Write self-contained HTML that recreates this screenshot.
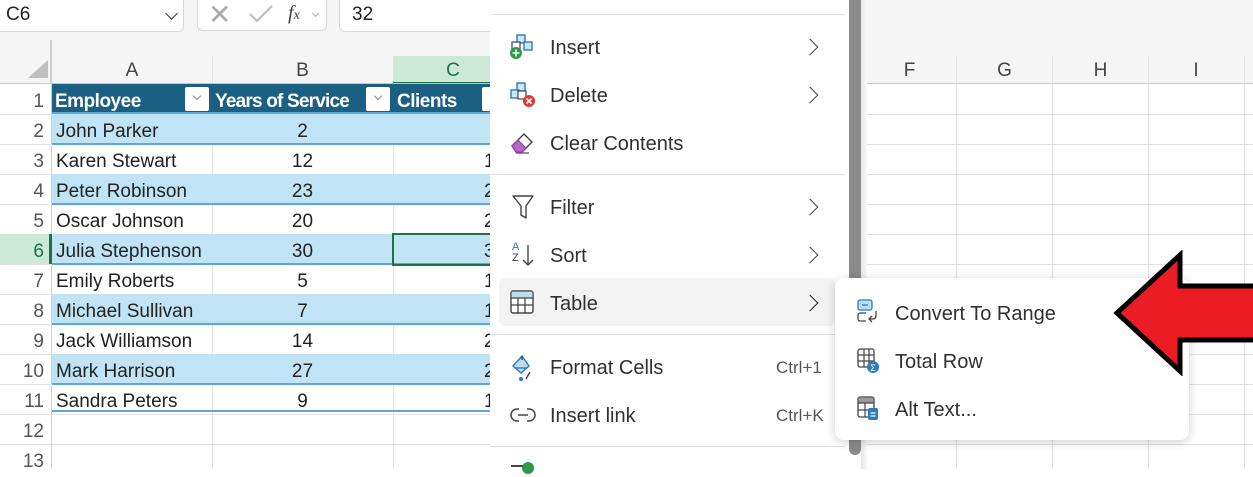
<!DOCTYPE html>
<html><head><meta charset="utf-8"><style>
*{margin:0;padding:0;box-sizing:border-box}
body{width:1253px;height:469px;overflow:hidden;background:#fff;font-family:"Liberation Sans",sans-serif;position:relative}
.a{position:absolute}
.top{left:0;top:0;width:1253px;height:84px;background:#f5f5f5}
.box{background:#fff;border:1px solid #d8d8d8;border-radius:6px}
.hl{height:1px;background:#e1e1e1}
.vl{width:1px;background:#e1e1e1}
.rn{left:0;width:50px;text-align:right;padding-right:6px;font-size:19px;color:#555;height:30px;line-height:30px;margin-top:2px}
.cell{font-size:19px;color:#222;height:30px;line-height:30px;margin-top:2px}
.band{background:#c0e4f5;border-bottom:2px solid #5aa8d8}
.mi{left:550px;font-size:20px;color:#303030;margin-top:1px}
.chev{left:804px;width:12px;height:12px;border-right:1.6px solid #444;border-top:1.6px solid #444;transform:rotate(45deg)}
.sep{left:490px;width:355px;height:1px;background:#e0e0e0}
.si{left:895px;font-size:20px;color:#303030;margin-top:1px}
.ch{font-size:19px;color:#444;text-align:center;margin-top:3px}
.dd{width:24px;height:24px;background:#fff;border-radius:2px}
.dd:after{content:"";position:absolute;left:9px;top:6px;width:5px;height:5px;border-right:1px solid #888;border-bottom:1px solid #888;transform:rotate(45deg)}
</style></head><body>
<div class="a top"></div>
<div class="a box" style="left:-6px;top:-8px;width:190px;height:40px"></div>
<div class="a" style="left:6px;top:4px;font-size:19px;color:#222">C6</div>
<div class="a" style="left:167px;top:9px;width:9px;height:9px;border-right:1.6px solid #333;border-bottom:1.6px solid #333;transform:rotate(45deg)"></div>
<div class="a box" style="left:197px;top:-8px;width:130px;height:39px"></div>
<div class="a" style="left:208px;top:-2px;font-size:28px;color:#aaa;font-weight:100">✕</div>
<svg class="a" style="left:248px;top:4px" width="26" height="20"><path d="M2 10 L9 17 L24 2" stroke="#bbb" stroke-width="2" fill="none"/></svg>
<div class="a" style="left:288px;top:2px;font-size:20px;font-style:italic;font-family:'Liberation Serif',serif;color:#444">f<span style="font-size:14px">x</span></div>
<div class="a" style="left:313px;top:11px;width:5px;height:5px;border-right:1px solid #aaa;border-bottom:1px solid #aaa;transform:rotate(45deg)"></div>
<div class="a box" style="left:339px;top:-8px;width:160px;height:40px;border-right:none"></div>
<div class="a" style="left:352px;top:4px;font-size:19px;color:#222">32</div>
<div class="a" style="left:50px;top:40px;width:2px;height:44px;background:#ccc"></div>
<svg class="a" style="left:28px;top:60px" width="20" height="18"><path d="M20 0 L20 18 L0 18Z" fill="#bfbfbf"/></svg>
<div class="a vl" style="left:212px;top:56px;height:413px"></div>
<div class="a vl" style="left:393px;top:56px;height:413px"></div>
<div class="a" style="left:393px;top:56px;width:100px;height:28px;background:#cbe9d6;border-bottom:2px solid #1e7145"></div>
<div class="a ch" style="left:52px;top:57px;width:160px">A</div>
<div class="a ch" style="left:212px;top:57px;width:181px">B</div>
<div class="a ch" style="left:393px;top:57px;width:120px;color:#1e7145">C</div>
<div class="a" style="left:0;top:83px;width:490px;height:1px;background:#c8c8c8"></div>
<div class="a" style="left:866px;top:83px;width:387px;height:1px;background:#c8c8c8"></div>
<div class="a ch" style="left:862px;top:57px;width:95px">F</div>
<div class="a ch" style="left:957px;top:57px;width:95px">G</div>
<div class="a ch" style="left:1053px;top:57px;width:95px">H</div>
<div class="a ch" style="left:1148px;top:57px;width:96px">I</div>
<div class="a vl" style="left:956px;top:56px;height:413px"></div>
<div class="a vl" style="left:1052px;top:56px;height:413px"></div>
<div class="a vl" style="left:1148px;top:56px;height:413px"></div>
<div class="a vl" style="left:1244px;top:56px;height:413px"></div>
<div class="a vl" style="left:51px;top:84px;height:385px;background:#d0d0d0"></div>
<div class="a hl" style="left:0;top:114px;width:1253px"></div>
<div class="a hl" style="left:0;top:144px;width:1253px"></div>
<div class="a hl" style="left:0;top:174px;width:1253px"></div>
<div class="a hl" style="left:0;top:204px;width:1253px"></div>
<div class="a hl" style="left:0;top:234px;width:1253px"></div>
<div class="a hl" style="left:0;top:264px;width:1253px"></div>
<div class="a hl" style="left:0;top:294px;width:1253px"></div>
<div class="a hl" style="left:0;top:324px;width:1253px"></div>
<div class="a hl" style="left:0;top:354px;width:1253px"></div>
<div class="a hl" style="left:0;top:384px;width:1253px"></div>
<div class="a hl" style="left:0;top:414px;width:1253px"></div>
<div class="a hl" style="left:0;top:444px;width:1253px"></div>
<div class="a" style="left:0;top:234px;width:50px;height:30px;background:#cbe9d6"></div>
<div class="a" style="left:49px;top:234px;width:3px;height:30px;background:#1e7145"></div>
<div class="a rn" style="top:85px">1</div><div class="a rn" style="top:115px">2</div><div class="a rn" style="top:145px">3</div><div class="a rn" style="top:175px">4</div><div class="a rn" style="top:205px">5</div><div class="a rn" style="top:235px;color:#1e7145">6</div><div class="a rn" style="top:265px">7</div><div class="a rn" style="top:295px">8</div><div class="a rn" style="top:325px">9</div><div class="a rn" style="top:355px">10</div><div class="a rn" style="top:385px">11</div><div class="a rn" style="top:415px">12</div><div class="a rn" style="top:445px">13</div>
<div class="a" style="left:52px;top:84px;width:440px;height:30px;background:#1b5f82;border-bottom:2px solid #5aa8d8"></div>
<div class="a" style="left:55px;top:86px;font-size:19px;font-weight:bold;color:#fff;line-height:32px;letter-spacing:-0.5px">Employee</div>
<div class="a dd" style="left:185px;top:87px"></div>
<div class="a" style="left:215px;top:86px;font-size:19px;font-weight:bold;color:#fff;line-height:32px;letter-spacing:-0.8px">Years of Service</div>
<div class="a dd" style="left:366px;top:87px"></div>
<div class="a" style="left:397px;top:86px;font-size:19px;font-weight:bold;color:#fff;line-height:32px;letter-spacing:-0.5px">Clients</div>
<div class="a dd" style="left:482px;top:87px"></div>
<div class="a band" style="left:52px;top:114px;width:440px;height:31px"></div>
<div class="a band" style="left:52px;top:174px;width:440px;height:31px"></div>
<div class="a band" style="left:52px;top:234px;width:440px;height:31px"></div>
<div class="a band" style="left:52px;top:294px;width:440px;height:31px"></div>
<div class="a band" style="left:52px;top:354px;width:440px;height:31px"></div>
<div class="a" style="left:52px;top:144px;width:440px;height:1px;background:#5aa8d8"></div>
<div class="a" style="left:52px;top:410px;width:440px;height:2px;background:#5aa8d8"></div>
<div class="a" style="left:392px;top:233px;width:102px;height:33px;border:2.5px solid #1e7145"></div>
<div class="a cell" style="left:56px;top:115px">John Parker</div><div class="a cell" style="left:212px;top:115px;width:181px;text-align:center">2</div>
<div class="a cell" style="left:56px;top:145px">Karen Stewart</div><div class="a cell" style="left:212px;top:145px;width:181px;text-align:center">12</div>
<div class="a cell" style="left:56px;top:175px">Peter Robinson</div><div class="a cell" style="left:212px;top:175px;width:181px;text-align:center">23</div>
<div class="a cell" style="left:56px;top:205px">Oscar Johnson</div><div class="a cell" style="left:212px;top:205px;width:181px;text-align:center">20</div>
<div class="a cell" style="left:56px;top:235px">Julia Stephenson</div><div class="a cell" style="left:212px;top:235px;width:181px;text-align:center">30</div>
<div class="a cell" style="left:56px;top:265px">Emily Roberts</div><div class="a cell" style="left:212px;top:265px;width:181px;text-align:center">5</div>
<div class="a cell" style="left:56px;top:295px">Michael Sullivan</div><div class="a cell" style="left:212px;top:295px;width:181px;text-align:center">7</div>
<div class="a cell" style="left:56px;top:325px">Jack Williamson</div><div class="a cell" style="left:212px;top:325px;width:181px;text-align:center">14</div>
<div class="a cell" style="left:56px;top:355px">Mark Harrison</div><div class="a cell" style="left:212px;top:355px;width:181px;text-align:center">27</div>
<div class="a cell" style="left:56px;top:385px">Sandra Peters</div><div class="a cell" style="left:212px;top:385px;width:181px;text-align:center">9</div>
<div class="a cell" style="left:484px;top:145px">1</div><div class="a cell" style="left:484px;top:175px">2</div><div class="a cell" style="left:484px;top:205px">2</div><div class="a cell" style="left:484px;top:235px">3</div><div class="a cell" style="left:484px;top:265px">1</div><div class="a cell" style="left:484px;top:295px">1</div><div class="a cell" style="left:484px;top:325px">2</div><div class="a cell" style="left:484px;top:355px">2</div><div class="a cell" style="left:484px;top:385px">1</div>
<div class="a" style="left:490px;top:0;width:359px;height:469px;background:#fff"></div>
<div class="a" style="left:849px;top:0;width:12px;height:455px;background:#8a8a8a;border-radius:0 0 6px 6px"></div>
<div class="a" style="left:861px;top:0;width:6px;height:469px;background:linear-gradient(90deg,#e6e6e6,#f9f9f9)"></div>
<div class="a sep" style="top:14px"></div>
<div class="a sep" style="top:174px"></div>
<div class="a sep" style="top:334px"></div>
<div class="a sep" style="top:446px"></div>
<div class="a" style="left:499px;top:278px;width:336px;height:48px;background:#f3f3f3;border-radius:6px"></div>
<svg class="a" style="left:509px;top:34px" width="28" height="28"><rect x="8" y="1" width="8" height="8" fill="#cfe6f7" stroke="#2a7bc0" stroke-width="1.4"/><rect x="15" y="8" width="8" height="8" fill="#cfe6f7" stroke="#2a7bc0" stroke-width="1.4"/><rect x="3" y="8" width="8" height="8" fill="#fff" stroke="#444" stroke-width="1.2"/><circle cx="7" cy="19" r="6" fill="#2e9a48"/><path d="M7 15.5v7M3.5 19h7" stroke="#fff" stroke-width="1.6"/></svg>
<div class="a mi" style="top:36px">Insert</div><div class="a chev" style="top:41px"></div>
<svg class="a" style="left:509px;top:82px" width="28" height="28"><rect x="8" y="1" width="8" height="8" fill="#cfe6f7" stroke="#2a7bc0" stroke-width="1.4"/><rect x="2" y="8" width="8" height="8" fill="#cfe6f7" stroke="#2a7bc0" stroke-width="1.4"/><rect x="9" y="9" width="8" height="8" fill="#fff" stroke="#444" stroke-width="1.2"/><circle cx="20" cy="19" r="6" fill="#e03a3a"/><path d="M17.5 16.5l5 5M22.5 16.5l-5 5" stroke="#fff" stroke-width="1.6"/></svg>
<div class="a mi" style="top:84px">Delete</div><div class="a chev" style="top:89px"></div>
<svg class="a" style="left:510px;top:130px" width="28" height="26"><path d="M2 16 L14 4 L22 12 L12 22 L6 22Z" fill="#fff" stroke="#444" stroke-width="1.4"/><path d="M2 16 L8 10 L16 18 L12 22 L6 22Z" fill="#b568c8" stroke="#8a3fa0" stroke-width="1"/><path d="M6 23h13" stroke="#8a3fa0" stroke-width="1.4"/></svg>
<div class="a mi" style="top:132px">Clear Contents</div>
<svg class="a" style="left:511px;top:194px" width="26" height="26"><path d="M2 2h20l-7 10v12l-5-3v-9Z" fill="none" stroke="#444" stroke-width="1.4" stroke-linejoin="round"/></svg>
<div class="a mi" style="top:196px">Filter</div><div class="a chev" style="top:201px"></div>
<div class="a" style="left:512px;top:242px;font-size:11px;color:#2a7bc0;line-height:11px">A<br><span style="color:#444">Z</span></div>
<svg class="a" style="left:522px;top:244px" width="12" height="24"><path d="M6 1v20M1 16l5 5 5-5" fill="none" stroke="#444" stroke-width="1.4"/></svg>
<div class="a mi" style="top:244px">Sort</div><div class="a chev" style="top:249px"></div>
<svg class="a" style="left:510px;top:290px" width="26" height="26"><rect x="1" y="1" width="22" height="22" rx="2" fill="#fff" stroke="#444" stroke-width="1.4"/><rect x="1.7" y="1.7" width="20.6" height="6" fill="#bcdcf2"/><path d="M1 8h22M1 15h22M8 8v15M15 8v15" stroke="#444" stroke-width="1.3"/></svg>
<div class="a mi" style="top:292px">Table</div><div class="a chev" style="top:297px;border-color:#222"></div>
<svg class="a" style="left:510px;top:354px" width="26" height="28"><path d="M12 2 L3 12 L11 19 L19 12Z" fill="#bcdcf2" stroke="#2a7bc0" stroke-width="1.4"/><path d="M5 14 L17 14" stroke="#2a7bc0" stroke-width="1.4"/><path d="M12 2v4" stroke="#444" stroke-width="1.4"/><circle cx="11" cy="25" r="2" fill="#2a7bc0"/><path d="M20 18 L16 25" stroke="#444" stroke-width="1.4"/></svg>
<div class="a mi" style="top:356px">Format Cells</div>
<div class="a" style="left:776px;top:358px;font-size:17px;color:#555">Ctrl+1</div>
<svg class="a" style="left:510px;top:404px" width="26" height="22"><path d="M9 5H7a6 6 0 0 0 0 12h2M17 5h2a6 6 0 0 1 0 12h-2M8 11h10" fill="none" stroke="#444" stroke-width="1.5"/></svg>
<div class="a mi" style="top:404px">Insert link</div>
<div class="a" style="left:776px;top:406px;font-size:17px;color:#555">Ctrl+K</div>
<div class="a" style="left:522px;top:462px;width:12px;height:12px;border-radius:6px;background:#2e9a48"></div>
<div class="a" style="left:511px;top:465px;width:12px;height:2px;background:#444"></div>
<div class="a" style="left:835px;top:278px;width:354px;height:162px;background:#fff;border-radius:9px;box-shadow:0 2px 10px rgba(0,0,0,.2)"></div>
<svg class="a" style="left:856px;top:299px" width="26" height="28"><rect x="2" y="1" width="14" height="10" rx="2" fill="#bcdcf2" stroke="#2a7bc0" stroke-width="1.3"/><path d="M6 6h6" stroke="#2a7bc0" stroke-width="1.3"/><path d="M10 14H4a2 2 0 0 0-2 2v4a2 2 0 0 0 2 2h6" fill="none" stroke="#444" stroke-width="1.3"/><path d="M20 12v5a3 3 0 0 1-3 3h-3M16 17l-3 3 3 3" fill="none" stroke="#444" stroke-width="1.3"/></svg>
<div class="a si" style="top:302px">Convert To Range</div>
<svg class="a" style="left:856px;top:347px" width="26" height="28"><rect x="2" y="2" width="16" height="18" rx="2" fill="#fff" stroke="#444" stroke-width="1.3"/><path d="M2 8h16M2 14h16M8 2v18M13 2v18" stroke="#444" stroke-width="1.2"/><circle cx="17" cy="20" r="6" fill="#2a7bc0"/><text x="17" y="24" font-size="9" fill="#fff" text-anchor="middle" font-family="Liberation Sans">Σ</text></svg>
<div class="a si" style="top:350px">Total Row</div>
<svg class="a" style="left:856px;top:395px" width="26" height="28"><rect x="2" y="2" width="16" height="20" rx="2" fill="#fff" stroke="#444" stroke-width="1.3"/><rect x="2.6" y="2.6" width="14.8" height="5" fill="#999"/><path d="M2 8h16M2 15h16M9 8v14" stroke="#444" stroke-width="1.2"/><rect x="12" y="13" width="10" height="12" rx="2" fill="#2a7bc0"/><path d="M14.5 18h5M14.5 21h5" stroke="#fff" stroke-width="1.3"/></svg>
<div class="a si" style="top:398px">Alt Text...</div>
<svg class="a" style="left:1110px;top:250px" width="143" height="126"><path d="M7 63 L70 5 L70 36 L150 36 L150 90 L70 90 L70 121Z" fill="#ec1c24" stroke="#000" stroke-width="5" stroke-linejoin="miter"/></svg>
</body></html>
